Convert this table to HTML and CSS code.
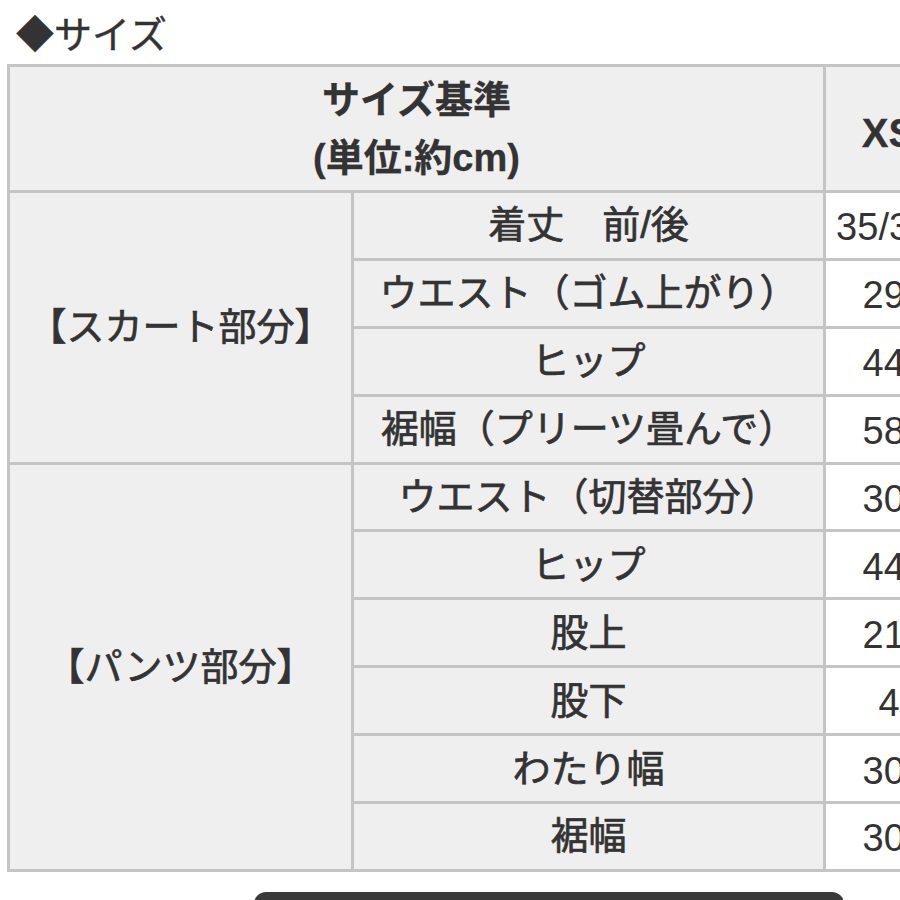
FILE: index.html
```html
<!DOCTYPE html>
<html lang="ja">
<head>
<meta charset="utf-8">
<title>サイズ</title>
<link rel="stylesheet" href="styles.css">
</head>
<body>
<h2 class="title"><span class="diamond">◆</span>サイズ</h2>
<table class="size-table">
  <colgroup><col class="c1"><col class="c2"><col class="c3"></colgroup>
  <tr class="head">
    <th colspan="2" class="label-head">サイズ基準<br>(単位:約cm)</th>
    <th class="size-head">XS</th>
  </tr>
  <tr>
    <th rowspan="4" class="group">【スカート部分】</th>
    <th class="item">着丈　前/後</th>
    <td class="val">35/37.5</td>
  </tr>
  <tr><th class="item">ウエスト（ゴム上がり）</th><td class="val">29.5</td></tr>
  <tr><th class="item">ヒップ</th><td class="val">44.5</td></tr>
  <tr><th class="item">裾幅（プリーツ畳んで）</th><td class="val">58.5</td></tr>
  <tr>
    <th rowspan="6" class="group">【パンツ部分】</th>
    <th class="item">ウエスト（切替部分）</th>
    <td class="val">30.5</td>
  </tr>
  <tr><th class="item">ヒップ</th><td class="val">44.5</td></tr>
  <tr><th class="item">股上</th><td class="val">21.5</td></tr>
  <tr><th class="item">股下</th><td class="val">41</td></tr>
  <tr><th class="item">わたり幅</th><td class="val">30.5</td></tr>
  <tr><th class="item">裾幅</th><td class="val">30.5</td></tr>
</table>
<div class="bar"></div>
</body>
</html>
```
FILE: styles.css
```css
html, body {
  margin: 0;
  padding: 0;
  overflow: hidden;
  background: #ffffff;
}
body {
  font-family: "Liberation Sans", "Noto Sans CJK JP", sans-serif;
  color: #333333;
}
.title {
  margin: 5px 0 6px 16px;
  font-family: "Noto Sans CJK JP", sans-serif;
  font-size: 38px;
  font-weight: 400;
  line-height: 53px;
  white-space: nowrap;
  -webkit-text-stroke: 0.4px #333333;
}
.diamond {
  font-family: "Noto Sans CJK JP", sans-serif;
}
.size-table {
  margin-left: 7px;
  border-collapse: separate;
  border-spacing: 0;
  table-layout: fixed;
  width: 969px;
  border-top: 3px solid #c4c4c4;
  border-left: 3px solid #c4c4c4;
}
.c1 { width: 344px; }
.c2 { width: 472px; }
.c3 { width: 150px; }
.size-table th,
.size-table td {
  box-sizing: border-box;
  border-right: 3px solid #c4c4c4;
  border-bottom: 3px solid #c4c4c4;
  padding: 0;
  text-align: center;
  vertical-align: middle;
  font-size: 38px;
  line-height: 58px;
  white-space: nowrap;
}
.size-table tr { height: 67.9px; }
.size-table tr.head { height: 126px; }
.size-table th {
  background: #efefef;
  font-weight: 400;
  -webkit-text-stroke: 0.7px #333333;
}
.size-table th.label-head {
  font-weight: 700;
  -webkit-text-stroke: 0.3px #333333;
}
.size-table th.size-head {
  font-size: 40px;
  font-weight: 700;
  padding-right: 22px;
  padding-top: 8px;
  -webkit-text-stroke: 0.3px #333333;
}
.size-table td.val {
  background: #ffffff;
  font-weight: 400;
  padding-top: 4px;
}
.bar {
  margin: 20px 0 0 254px;
  width: 590px;
  height: 40px;
  background: #3a3a3a;
  border-radius: 12px 12px 0 0;
}
```
